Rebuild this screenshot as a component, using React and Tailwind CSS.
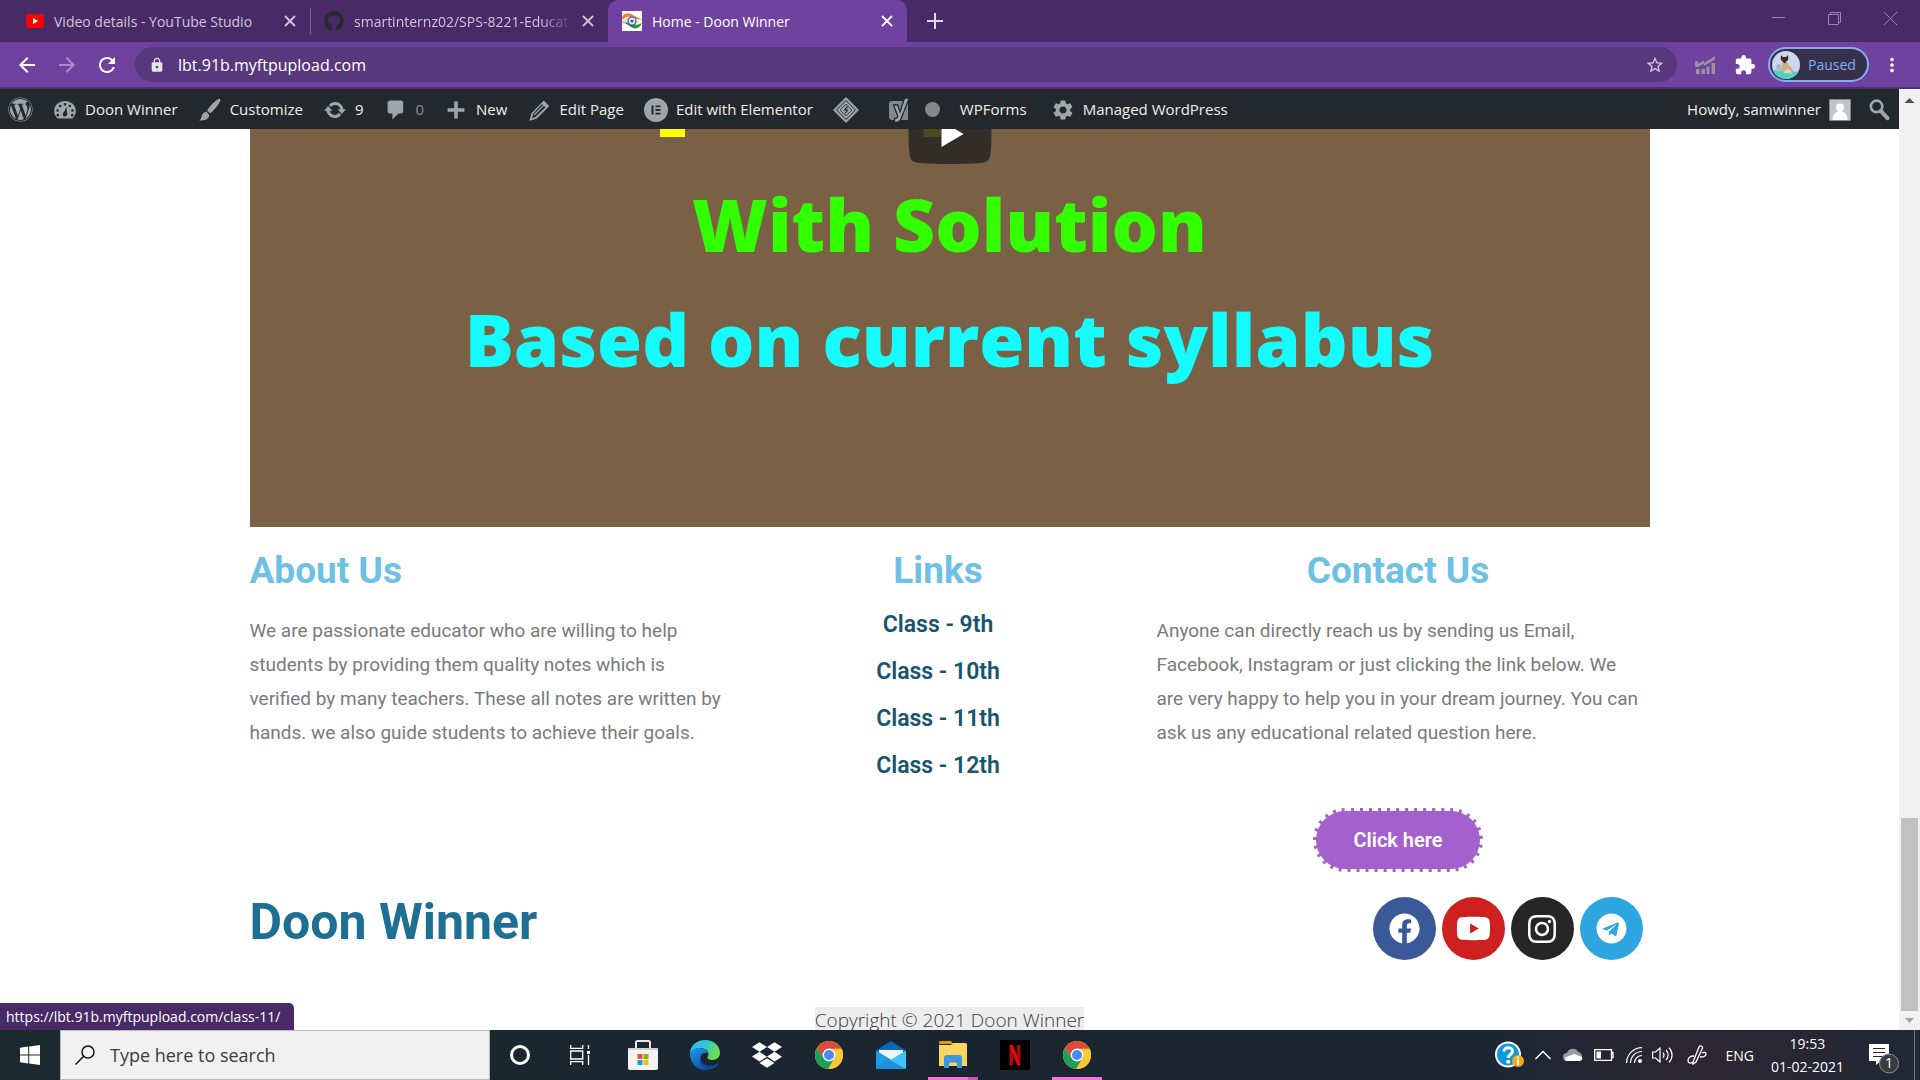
import React from "react";
import { FaWordpress, FaYoutube, FaInstagram, FaFacebook, FaTelegram, FaGithub, FaDropbox } from "react-icons/fa";
import { MdArrowBack, MdArrowForward, MdRefresh, MdLock, MdStarBorder, MdExtension, MdMoreVert, MdSettings } from "react-icons/md";

const UI = "font-['Open_Sans','Noto_Sans',sans-serif]";

/* ---------- icons ---------- */

const CloseX = ({ className = "" }) => (
  <svg viewBox="0 0 12 12" className={"size-3 " + className} fill="none" stroke="currentColor" strokeWidth="1.8">
    <path d="M1 1l10 10M11 1L1 11" />
  </svg>
);

const FlagIcon = () => (
  <svg viewBox="0 0 20 20" className="size-5 shrink-0">
    <rect width="20" height="20" fill="#fff" />
    <path d="M0 6C3 1 8 2 11 4s6 2 9 5c-3-1-6 0-9-2S4 5 0 9z" fill="#f58220" />
    <path d="M0 9c4-3 7-1 9 0 4 2 7 1 11 2-4 2-7 2-10 1S4 9 0 13z" fill="#dcdcdc" />
    <path d="M20 12c-2 5-7 7-11 4-3-2-5-4-9-4 4-1 6 0 10 1s7 1 10-1z" fill="#1f9a2e" />
    <circle cx="10" cy="10" r="4" fill="#e8eaf6" stroke="#3f51a0" strokeWidth="1.2" />
    <circle cx="10" cy="10" r="1.6" fill="#3f51a0" />
  </svg>
);

const DashIcon = () => (
  <svg viewBox="0 0 20 20" className="size-6" fill="#a0a5aa">
    <path fillRule="evenodd" d="M3.8 17h12.4C17.900 15.400 19 13.300 19 11c0-5-4-8.500-9-8.500S1 6 1 11c0 2.300 1.100 4.400 2.800 6zM10 4.200a1.100 1.100 0 1 1 0 2.200 1.100 1.100 0 0 1 0-2.200zM6 5.600a1.100 1.100 0 1 1 0 2.200 1.100 1.100 0 0 1 0-2.200zm8 0a1.100 1.100 0 1 1 0 2.200 1.100 1.100 0 0 1 0-2.200zM3.800 9.300a1.100 1.100 0 1 1 0 2.200 1.100 1.100 0 0 1 0-2.200zm12.400 0a1.100 1.100 0 1 1 0 2.200 1.100 1.100 0 0 1 0-2.200zM11.200 7.500L11.900 13c.1 1.300-.7 2.500-1.900 2.500S8 14.500 8.100 13.300c.1-.8.5-1.300 1.100-1.700zM4 13.200a1.100 1.100 0 1 1 0 2.200 1.100 1.100 0 0 1 0-2.200zm12 0a1.100 1.100 0 1 1 0 2.200 1.100 1.100 0 0 1 0-2.200z" />
  </svg>
);

const BrushIcon = () => (
  <svg viewBox="0 0 20 20" className="size-6" fill="#a0a5aa">
    <path d="M18.300.7c1 .9-.5 4-3.300 7.300-2 2.400-3.900 4.300-4.900 4.800L7.600 10.400c.5-1 2.100-3.300 4.200-5.500C14.700 1.900 17.500-.1 18.300.7zM6.700 11.300l2.500 2.400c.3 2-.9 3.600-2.900 4.400-1.700.7-3.800.9-5.300.4 1.400-.6 1.700-1.700 2-3.100.5-2.300 1.900-3.600 3.700-4.100z" />
  </svg>
);

const UpdateIcon = () => (
  <svg viewBox="0 0 20 20" className="size-6" fill="#a0a5aa">
    <path d="M10.200 3.280c3.530 0 6.430 2.610 6.920 6h2.080l-3.500 4-3.500-4h2.320c-.45-1.970-2.210-3.450-4.320-3.450-1.450 0-2.730.71-3.540 1.780L4.950 5.660C6.230 4.200 8.110 3.280 10.200 3.280zm-.4 13.440c-3.520 0-6.430-2.610-6.920-6H.8l3.500-4c1.170 1.330 2.330 2.670 3.500 4H5.480c.45 1.970 2.210 3.450 4.320 3.450 1.450 0 2.730-.71 3.540-1.780l1.710 1.950c-1.280 1.460-3.150 2.380-5.250 2.380z" />
  </svg>
);

const CommentIcon = () => (
  <svg viewBox="0 0 20 20" className="size-6" fill="#a0a5aa">
    <path d="M5 2h9c1.100 0 2 .9 2 2v7c0 1.100-.9 2-2 2h-2l-5 5v-5H5c-1.100 0-2-.9-2-2V4c0-1.100.9-2 2-2z" />
  </svg>
);

const PlusIcon = () => (
  <svg viewBox="0 0 20 20" className="size-6" fill="#a0a5aa">
    <path d="M17 8.500v3h-5.500V17h-3v-5.500H3v-3h5.500V3h3v5.500z" />
  </svg>
);

const PencilIcon = () => (
  <svg viewBox="0 0 20 20" className="size-6" fill="#a0a5aa">
    <path fillRule="evenodd" d="M13.900 2.100l4 4c.4.400.4 1 0 1.400L8 17.300 2 19l1.600-6L13.900 2.100zM4.400 16.700l2.500-.7L15.300 7.700l-1.200-1.200-7.800 8-.7-.7 7.800-7.900-.9-.9L5 13.400z" />
  </svg>
);

const ElementorIcon = () => (
  <svg viewBox="0 0 24 24" className="size-6">
    <circle cx="12" cy="12" r="12" fill="#a0a5aa" />
    <path d="M7.500 7.500h2v9h-2zM11.500 7.500h5v1.800h-5zM11.500 11.100h5v1.800h-5zM11.500 14.700h5v1.800h-5z" fill="#23282d" />
  </svg>
);

const DiamondIcon = () => (
  <svg viewBox="0 0 26 26" className="size-[26px]" fill="none">
    <path d="M13 0l13 13-13 13L0 13z" fill="#a0a5aa" />
    <path d="M13 3.500l9.500 9.500-9.500 9.500L3.500 13z" stroke="#23282d" />
    <path d="M13 7l6 6-6 6-6-6z" stroke="#23282d" strokeWidth=".8" />
    <path d="M14.500 9.500l-3 3.500h3L12 16.500" stroke="#23282d" strokeWidth="1.200" />
  </svg>
);

const YoastIcon = () => (
  <svg viewBox="0 0 24 26" className="h-[26px] w-6">
    <path d="M5 4h16v19H5a3 3 0 0 1-3-3V7a3 3 0 0 1 3-3z" fill="#82878c" />
    <path d="M17.500 1h4.800L14 22c-1 2.500-2.600 3.600-6.500 3.600v-4c2 0 2.800-.8 3.300-2.300L6.500 8h4.200l2.300 7z" fill="#a0a5aa" stroke="#23282d" strokeWidth="1.300" />
  </svg>
);

const AdSearchIcon = () => (
  <svg viewBox="0 0 20 20" className="size-6" fill="none" stroke="#a0a5aa">
    <circle cx="8" cy="7" r="4.800" strokeWidth="2.200" />
    <path d="M11.500 10.800l5.500 6" strokeWidth="3.400" strokeLinecap="round" />
  </svg>
);

const AvatarCat = () => (
  <svg viewBox="0 0 28 28" className="size-7 shrink-0">
    <defs><clipPath id="cat"><circle cx="14" cy="14" r="14" /></clipPath></defs>
    <g clipPath="url(#cat)">
      <rect width="28" height="28" fill="#cdd6ea" />
      <path d="M0 19l28 2v7H0z" fill="#4fd3c4" />
      <path d="M4 17c0-4 3-5 5-3l1 6-5-1z" fill="#aab6c8" />
      <path d="M10.500 10h4c1 4 5 5 6.500 10l1 2.500-11.500-.5c-1-4-.5-8 0-12z" fill="#c9b08a" />
      <path d="M12 22c0-4 5-6 7-1.500l1 2z" fill="#e6d3b0" />
      <path d="M9 4l2 2h3l2-2 .3 4.500-3.800 4-3.800-4z" fill="#3b2c26" />
    </g>
  </svg>
);

const ChromeIcon = () => (
  <svg viewBox="0 0 28 28" className="size-7">
    <circle cx="14" cy="14" r="14" fill="#fbbc2f" />
    <path d="M1.900 7A14 14 0 0 1 26.100 7L27 9.500H14L8.500 17z" fill="#dd4b3e" />
    <path d="M1.900 7A14 14 0 0 0 13 27.970L19.500 17 8.200 16.500z" fill="#1fa05a" />
    <path d="M14 7.800h12.600A14 14 0 0 1 13.500 28l6-11z" fill="#fcc934" />
    <circle cx="14" cy="14" r="6.400" fill="#fff" />
    <circle cx="14" cy="14" r="5" fill="#4a8af4" />
  </svg>
);

const StoreIcon = () => (
  <svg viewBox="0 0 30 30" className="size-[30px]">
    <path d="M8 8V2.500A1.500 1.500 0 0 1 9.500 1h11A1.500 1.500 0 0 1 22 2.500V8" fill="none" stroke="#e8e8e8" strokeWidth="2" />
    <path d="M0 8h30v20a2 2 0 0 1-2 2H2a2 2 0 0 1-2-2z" fill="#f3f3f3" />
    <path d="M0 8h30v2H0z" fill="#d4d4d4" />
    <path d="M9.500 14H14.500v5h-5z" fill="#f25022" />
    <path d="M15.500 14h5v5h-5z" fill="#7fba00" />
    <path d="M9.500 20h5v5h-5z" fill="#00a4ef" />
    <path d="M15.500 20h5v5h-5z" fill="#ffb900" />
  </svg>
);

const EdgeIcon = () => (
  <svg viewBox="0 0 30 30" className="size-[30px]">
    <defs>
      <linearGradient id="eg1" x1="0" y1="0" x2="1" y2="0.400"><stop offset="0" stopColor="#35b8f5" /><stop offset="0.550" stopColor="#33c5cf" /><stop offset="1" stopColor="#6be04a" /></linearGradient>
      <linearGradient id="eg2" x1="0" y1="0" x2="0.600" y2="1"><stop offset="0" stopColor="#1e9be8" /><stop offset="1" stopColor="#0b53a8" /></linearGradient>
    </defs>
    <path d="M0 14C0 5.500 6.800 0 15 0c9 0 15 6.200 15 12.500 0 4.600-3.400 7.500-7.500 7.500-3.600 0-5.300-1.300-5-2.700.3-1 1-1.700 1-3.300C18.500 10.500 14.500 8 10.500 8 5 8 1 11.500 0 14z" fill="url(#eg1)" />
    <path d="M0 14c1-4 5-6 9.500-6 5 0 8.500 2.800 9 6-1.500-2-6-2-7.500 1.500C8.500 21.500 13 30 21 28.800 19.500 29.700 17 30 15 30 6.500 30 0 23 0 14z" fill="url(#eg2)" />
    <path d="M11 15.500C9.800 21 14 26 19.500 26c3.500 0 6-1.500 7.500-2.500 1-.5 1.700.2 1 1.200C26 27.500 24 28.500 21 29 13 30 7 22 11 15.500z" fill="#11499a" />
  </svg>
);

const MailIcon = () => (
  <svg viewBox="0 0 30 28" className="h-7 w-[30px]">
    <path d="M0 9.500L15 0l15 9.500V27H0z" fill="#0a67b8" />
    <path d="M3 9h24v8L15 21 3 17z" fill="#f2f2f2" />
    <path d="M0 9.500L30 28H1.500A1.500 1.500 0 0 1 0 26.500z" fill="#1f9ce6" />
    <path d="M30 9.500L11 21l19 7z" fill="#40c4f7" />
    <path d="M0 26.500L12 18l18 10H1.500A1.500 1.500 0 0 1 0 26.500z" fill="#1b8fdc" />
  </svg>
);

const FolderIcon = () => (
  <svg viewBox="0 0 28 28" className="size-7">
    <path d="M0 1.500A1.500 1.500 0 0 1 1.500 0H12l2 3H0z" fill="#e19c00" />
    <path d="M0 4h12l2-2h12.500A1.500 1.500 0 0 1 28 3.500V25H0z" fill="#fdd55c" />
    <path d="M5 27V17a3 3 0 0 1 3-3h12a3 3 0 0 1 3 3v10h-5v-4a1.500 1.500 0 0 0-1.500-1.500h-5A1.500 1.500 0 0 0 10 23v4z" fill="#3e97dc" />
  </svg>
);

const NetflixIcon = () => (
  <svg viewBox="0 0 30 30" className="size-[30px]">
    <rect width="30" height="30" fill="#000" />
    <path d="M9.500 5H13v20l-3.500.5zM17 5h3.500v20.500L17 25z" fill="#b1060f" />
    <path d="M9.500 5H13l7.500 20.500L17 25z" fill="#e50914" />
  </svg>
);

const TaskViewIcon = () => (
  <svg viewBox="0 0 20 20" className="size-5" fill="none" stroke="#fff" strokeWidth="1.300">
    <path d="M.7 0v3.300h12V0M.7 20v-3.300h12V20M.7 6h12v8H.7zM18.500 0v4M18.500 10v10" />
    <path d="M17 6h3v3h-3z" fill="#fff" stroke="none" />
  </svg>
);

/* ---------- browser chrome ---------- */

function TabStrip() {
  return (
    <div className="flex h-[42px] items-stretch bg-[#472a66]">
      <div className="flex w-[310px] items-center pr-[14px] pl-[26px] text-[#cfc6dc]">
        <svg viewBox="0 0 18 14" className="h-[14px] w-[18px] shrink-0">
          <rect width="18" height="14" rx="3" fill="#f00" />
          <path d="M7 4l5 3-5 3z" fill="#fff" />
        </svg>
        <span className="ml-[10px] flex-1 text-[14px] whitespace-nowrap">Video details - YouTube Studio</span>
        <button aria-label="Close tab"><CloseX /></button>
      </div>
      <div className="my-2 mr-[13px] w-px bg-[#7d679a]" />
      <div className="flex w-[284px] items-center pr-[14px] text-[#cfc6dc]">
        <FaGithub className="size-5 shrink-0 text-[#24292e]" />
        <span className="mr-[9px] ml-[10px] min-w-0 flex-1 overflow-hidden text-[14px] whitespace-nowrap mask-r-from-85%">smartinternz02/SPS-8221-Educat</span>
        <button aria-label="Close tab"><CloseX /></button>
      </div>
      <div className="flex w-[299px] items-center rounded-t-[10px] bg-[#6f42a0] px-[14px] text-white">
        <FlagIcon />
        <span className="ml-[10px] flex-1 text-[14px]">Home - Doon Winner</span>
        <button aria-label="Close tab"><CloseX /></button>
      </div>
      <button aria-label="New tab" className="ml-5 text-[#e0d8ea]">
        <svg viewBox="0 0 16 16" className="size-4" fill="none" stroke="currentColor" strokeWidth="2"><path d="M8 0v16M0 8h16" /></svg>
      </button>
      <div className="ml-auto flex items-start gap-[43px] pt-3 pr-[23px] text-[#9a86b0]">
        <button aria-label="Minimize"><svg viewBox="0 0 13 13" className="size-[13px]" stroke="currentColor" fill="none"><path d="M0 5.500h13" /></svg></button>
        <button aria-label="Restore"><svg viewBox="0 0 13 13" className="size-[13px]" stroke="currentColor" fill="none"><path d="M.5 2.500h10v10H.5zM2.500 2.500v-2h10v10h-2" /></svg></button>
        <button aria-label="Close"><svg viewBox="0 0 13 13" className="size-[13px]" stroke="currentColor" fill="none"><path d="M0 0l13 13M13 0L0 13" /></svg></button>
      </div>
    </div>
  );
}

function Toolbar() {
  return (
    <div className="flex h-[47px] items-center border-b-2 border-[#4f2f73] bg-[#6f42a0] pr-[17px] pl-[15px] text-white">
      <button aria-label="Back"><MdArrowBack className="size-6" /></button>
      <button aria-label="Forward" className="ml-4 text-[#a98bc7]"><MdArrowForward className="size-6" /></button>
      <button aria-label="Reload" className="ml-4"><MdRefresh className="size-6" /></button>
      <div className="ml-4 flex h-[35px] flex-1 items-center rounded-full bg-[#58387c] pr-3 pl-[14px]">
        <MdLock className="size-4 shrink-0 text-[#e6e1ec]" />
        <input aria-label="Address" defaultValue="lbt.91b.myftpupload.com" className="ml-[13px] min-w-0 flex-1 bg-transparent text-[16px] outline-none" />
        <button aria-label="Bookmark"><MdStarBorder className="size-5 text-[#cfc3dc]" /></button>
      </div>
      <svg viewBox="0 0 20 20" className="ml-[18px] size-5" fill="#9a9399">
        <path d="M0 6h3v3l6-3.500v2.500L20 1v3.500L9 11V8.500L3 12H0zM1 14h3.500v5H1zM6.500 14H10v5H6.500zM11.500 11.500h3V19h-3zM16.500 8H20v11h-3.500z" />
      </svg>
      <button aria-label="Extensions" className="ml-[19px]"><MdExtension className="size-[22px]" /></button>
      <button className="ml-3 flex h-[35px] w-[101px] items-center gap-2 rounded-full border-2 border-[#83adf0] bg-[#36304b] pl-[2px] text-[14px] text-[#83adf5]">
        <AvatarCat />
        Paused
      </button>
      <button aria-label="Menu" className="ml-3"><MdMoreVert className="size-[22px]" /></button>
    </div>
  );
}

/* ---------- WordPress admin bar ---------- */

const BarItem = ({ icon, children, dim }) => (
  <a href="#" className={"flex items-center gap-2 " + (dim ? "text-[#8b9095]" : "")}>
    {icon}
    {children}
  </a>
);

function AdminBar() {
  return (
    <nav className="flex h-10 items-center gap-5 bg-[#23282d] pt-px pr-2 pl-2 text-[15px] text-[#eee]">
      <a href="#" aria-label="WordPress"><FaWordpress className="size-[25px] text-[#a0a5aa]" /></a>
      <BarItem icon={<DashIcon />}>Doon Winner</BarItem>
      <BarItem icon={<BrushIcon />}>Customize</BarItem>
      <BarItem icon={<UpdateIcon />}>9</BarItem>
      <BarItem icon={<CommentIcon />} dim>0</BarItem>
      <BarItem icon={<PlusIcon />}>New</BarItem>
      <BarItem icon={<PencilIcon />}>Edit Page</BarItem>
      <BarItem icon={<ElementorIcon />}>Edit with Elementor</BarItem>
      <a href="#" aria-label="Divi"><DiamondIcon /></a>
      <a href="#" aria-label="SEO" className="ml-2 flex items-center gap-[14px]">
        <YoastIcon />
        <span className="size-[15px] rounded-full bg-[#888]" />
      </a>
      <a href="#" className="mr-1">WPForms</a>
      <BarItem icon={<MdSettings className="size-6 text-[#a0a5aa]" />}>Managed WordPress</BarItem>
      <a href="#" className="ml-auto flex items-center gap-2">
        Howdy, samwinner
        <svg viewBox="0 0 22 22" className="size-[22px]">
          <rect x=".5" y=".5" width="21" height="21" fill="#c3c4c6" stroke="#82878c" />
          <circle cx="11" cy="8.500" r="4" fill="#fff" />
          <path d="M3.500 21c0-5 3-9 7.500-9s7.500 4 7.500 9z" fill="#fff" />
        </svg>
      </a>
      <button aria-label="Search" className="-ml-1"><AdSearchIcon /></button>
    </nav>
  );
}

/* ---------- page ---------- */

function Video() {
  return (
    <section className="relative h-[398px] overflow-hidden bg-[#7a6045] text-center font-['Open_Sans',sans-serif] text-[73px] leading-[115px] font-extrabold">
      <span className="absolute top-0 left-[410px] h-2 w-[25px] bg-[#ff0]" />
      <button aria-label="Play" className="absolute -top-[25px] left-1/2 -translate-x-1/2">
        <svg viewBox="0 0 85 60" className="h-[60px] w-[85px]">
          <path d="M2 10C3 3 6 1.500 12 1 30-.3 55-.3 73 1c6 .5 9 2 10 9 1.300 12 1.300 28 0 40-1 7-4 8.500-10 9-18 1.300-43 1.300-61 0-6-.5-9-2-10-9C.7 38 .7 22 2 10z" fill="#332d28" />
          <path d="M16 20h18v13H16z" fill="#4d4a1c" />
          <path d="M34 17l22 13-22 13z" fill="#fff" />
        </svg>
      </button>
      <p className="mt-[37px] text-[#32ff00]">With Solution</p>
      <p className="text-[#15fcff]">Based on current syllabus</p>
    </section>
  );
}

const headingCls = "text-[37px] leading-[46px] font-bold text-[#6ec1e4]";

const classes = ["Class - 9th", "Class - 10th", "Class - 11th", "Class - 12th"];

function Info() {
  return (
    <section className="grid grid-cols-[478fr_421fr_491fr] pt-[21px] pr-[10px]">
      <div>
        <h2 className={headingCls}>About Us</h2>
        <p className="mt-5 text-[19px] leading-[34px] text-[#7a7a7a]">
          We are passionate educator who are willing to help students by providing them quality notes which is verified by many teachers. These all notes are written by hands. we also guide students to achieve their goals.
        </p>
      </div>
      <div className="text-center">
        <h2 className={headingCls}>Links</h2>
        <ul className="mt-[7px] text-[23px] leading-[47px] font-semibold text-[#17546f]">
          {classes.map((c) => (
            <li key={c}><a href="#">{c}</a></li>
          ))}
        </ul>
      </div>
      <div className="pl-2">
        <h2 className={headingCls + " text-center"}>Contact Us</h2>
        <p className="mt-5 text-[19px] leading-[34px] text-[#7a7a7a]">
          Anyone can directly reach us by sending us Email, Facebook, Instagram or just clicking the link below. We are very happy to help you in your dream journey. You can ask us any educational related question here.
        </p>
        <div className="mt-[58px] flex justify-center">
          <button className="h-16 w-[170px] rounded-full border-3 border-dashed border-white bg-[#a460cc] text-[20px] font-semibold text-white">Click here</button>
        </div>
      </div>
    </section>
  );
}

function Footer() {
  return (
    <footer>
      <div className="flex items-start justify-between pt-[25px] pr-[7px]">
        <h1 className="text-[50px] leading-[50px] font-bold text-[#1d7094]">Doon Winner</h1>
        <div className="flex gap-[6px] text-white">
          <a href="#" aria-label="Facebook" className="flex size-[63px] items-center justify-center rounded-full bg-[#3b5998]"><FaFacebook className="size-[31px]" /></a>
          <a href="#" aria-label="YouTube" className="flex size-[63px] items-center justify-center rounded-full bg-[#cd201f]"><FaYoutube className="size-[35px]" /></a>
          <a href="#" aria-label="Instagram" className="flex size-[63px] items-center justify-center rounded-full bg-[#262626]"><FaInstagram className="size-8" /></a>
          <a href="#" aria-label="Telegram" className="flex size-[63px] items-center justify-center rounded-full bg-[#2ca5e0]"><FaTelegram className="size-[31px]" /></a>
        </div>
      </div>
      <p className={"mt-[47px] text-center text-[19px] leading-[27px] font-light text-[#3a3a3a] " + UI}>
        <span className="inline-block bg-[#ededed]">Copyright © 2021 Doon Winner</span>
      </p>
    </footer>
  );
}

function Scrollbar() {
  return (
    <div className="flex w-[21px] shrink-0 flex-col items-center bg-[#f1f1f1]">
      <svg viewBox="0 0 21 21" className="size-[21px]"><path d="M10.500 9l5 5h-10z" fill="#505050" /></svg>
      <div className="flex w-full flex-1 flex-col justify-end px-[2px]">
        <div className="h-[193px] bg-[#c1c1c1]" />
      </div>
      <svg viewBox="0 0 19 19" className="size-[19px]"><path d="M9.500 12L5 7h9z" fill="#a3a3a3" /></svg>
    </div>
  );
}

/* ---------- Windows taskbar ---------- */

const TaskIcon = ({ label, children, open, stacked }) => (
  <button aria-label={label} className="relative flex w-[62px] items-center justify-center">
    {children}
    {open && (
      <span className="absolute inset-x-[6px] bottom-0 flex h-[3px] bg-[#f76fe0]">
        {stacked && <span className="ml-auto w-[10px] bg-[#c058b4]" />}
      </span>
    )}
  </button>
);

function Taskbar() {
  return (
    <div className="flex h-[50px] shrink-0 items-stretch bg-linear-to-r from-[#1a2a2f] via-[#1b2530] to-[#1f2835] text-white">
      <button aria-label="Start" className="flex w-[60px] items-center justify-center">
        <svg viewBox="0 0 20 20" className="size-5" fill="#fff"><path d="M0 2.800l8.200-1.200v8H0zM9.200 1.400L20 0v9.600H9.200zM0 10.500h8.200v8L0 17.300zM9.200 10.500H20V20l-10.800-1.400z" /></svg>
      </button>
      <label className="flex w-[430px] items-center border border-[#b9b9b9] bg-[#f1f1f1] pl-[14px]">
        <svg viewBox="0 0 20 20" className="size-5" fill="none" stroke="#111" strokeWidth="1.500"><circle cx="13" cy="7" r="6" /><path d="M8.700 11.300L.5 19.500" /></svg>
        <input aria-label="Search" placeholder="Type here to search" className="ml-[15px] flex-1 bg-transparent text-[18px] outline-none placeholder:text-[#3b3b3b]" />
      </label>
      <button aria-label="Cortana" className="flex w-[60px] items-center justify-center">
        <span className="size-5 rounded-full border-3 border-white" />
      </button>
      <button aria-label="Task view" className="mr-[2px] flex w-[60px] items-center justify-center"><TaskViewIcon /></button>
      <TaskIcon label="Store"><StoreIcon /></TaskIcon>
      <TaskIcon label="Edge"><EdgeIcon /></TaskIcon>
      <TaskIcon label="Dropbox"><FaDropbox className="size-[30px]" /></TaskIcon>
      <TaskIcon label="Chrome"><ChromeIcon /></TaskIcon>
      <TaskIcon label="Mail"><MailIcon /></TaskIcon>
      <TaskIcon label="File Explorer" open stacked><FolderIcon /></TaskIcon>
      <TaskIcon label="Netflix"><NetflixIcon /></TaskIcon>
      <TaskIcon label="Chrome window" open><ChromeIcon /></TaskIcon>

      <div className="ml-auto flex items-center bg-linear-to-r from-[#1d2332]/0 via-[#2c2632] to-[#1f2835]">
        <svg viewBox="0 0 30 28" className="h-7 w-[30px]">
          <circle cx="13" cy="13.500" r="13" fill="#fff" />
          <circle cx="13" cy="13.500" r="11" fill="#0f97dc" />
          <path d="M9 10.500C9 5.500 17.500 5.500 17.500 10.200c0 3.300-4.300 3.300-4.300 6.800" fill="none" stroke="#fff" strokeWidth="3" />
          <circle cx="13.200" cy="20.800" r="2" fill="#fff" />
          <circle cx="23" cy="20" r="6" fill="#f5a81c" />
          <path d="M22 18.500h2V24h-2zM22 15.500h2v2h-2z" fill="#fff" />
        </svg>
        <svg viewBox="0 0 16 10" className="ml-[10px] h-[10px] w-4" fill="none" stroke="#fff" strokeWidth="1.400"><path d="M.5 9L8 1.500 15.500 9" /></svg>
        <svg viewBox="0 0 20 14" className="ml-3 h-[14px] w-5"><path d="M4 13a4 4 0 0 1 0-8 6 6 0 0 1 11-1 5 5 0 0 1 4 5z" fill="#9b9ca3" /><path d="M3 13a3 3 0 0 1 0-4l8-3 8 3a3 3 0 0 1-2 4z" fill="#fff" /></svg>
        <svg viewBox="0 0 20 12" className="ml-[11px] h-3 w-5" fill="none" stroke="#fff" strokeWidth="1.300"><path d="M.7.7h16.800v10.600H.7zM17.500 3.500H19v5h-1.500" /><path d="M2.500 2.500H7v7H2.500z" fill="#fff" stroke="none" /></svg>
        <svg viewBox="0 0 16 16" className="ml-3 size-4" fill="none" stroke="#fff" strokeWidth="1.200"><path d="M.6 16A15.400 15.400 0 0 1 16 .6M4.500 16A11.500 11.500 0 0 1 16 4.500M8.500 16A7.500 7.500 0 0 1 16 8.500" /><circle cx="14" cy="14" r="2" fill="#fff" stroke="none" /></svg>
        <svg viewBox="0 0 21 16" className="ml-[10px] h-4 w-[21px]" fill="none" stroke="#fff" strokeWidth="1.200"><path d="M.6 5h3L8 1v14l-4.400-4H.6zM11 5.500a4 4 0 0 1 0 5M14 3a7 7 0 0 1 0 10M17 .8a10 10 0 0 1 0 14.400" /></svg>
        <svg viewBox="0 0 20 20" className="ml-[14px] size-5" fill="none" stroke="#fff" strokeWidth="1.300"><path d="M6 17L12 2c1-2 4-1 3.500 1L9 17l-3 2zM7 11c-4 0-6 2-6 4.500S3.500 19 6 17M13 12c3 0 6-1 6-3s-2-2-4-1" /></svg>
        <span className="ml-[18px] text-[14px]">ENG</span>
        <div className="ml-[17px] text-center text-[14px] leading-[23px]"><div>19:53</div><div>01-02-2021</div></div>
        <button aria-label="Notifications" className="relative ml-[25px] h-[22px] w-[30px]">
          <svg viewBox="0 0 30 30" className="size-[30px]">
            <path d="M0 0h20v17h-8l-5 4v-4H0z" fill="#fff" />
            <path d="M4 4.500h12M4 8.500h12M4 12.500h12" stroke="#222733" strokeWidth="1.200" />
            <circle cx="20" cy="19.500" r="9.500" fill="#3a3b3f" stroke="#8d8f94" />
          </svg>
          <span className="absolute top-[9px] left-4 text-[14px] leading-5">1</span>
        </button>
        <span className="mr-[5px] ml-[15px] h-[50px] w-px bg-[#70757d]" />
      </div>
    </div>
  );
}

export default function App() {
  return (
    <div className={"flex h-screen flex-col overflow-hidden bg-white " + UI}>
      <TabStrip />
      <Toolbar />
      <div className="relative flex min-h-0 flex-1">
        <div className="min-w-0 flex-1 overflow-hidden">
          <AdminBar />
          <main className="mx-auto max-w-[1400px] font-['Roboto',sans-serif]">
            <Video />
            <Info />
            <Footer />
          </main>
        </div>
        <Scrollbar />
        <div className="absolute bottom-0 left-0 h-[27px] rounded-tr-[5px] bg-[#472a66] pr-[14px] pl-[6px] text-[14px] leading-[27px] text-white">https://lbt.91b.myftpupload.com/class-11/</div>
      </div>
      <Taskbar />
    </div>
  );
}
